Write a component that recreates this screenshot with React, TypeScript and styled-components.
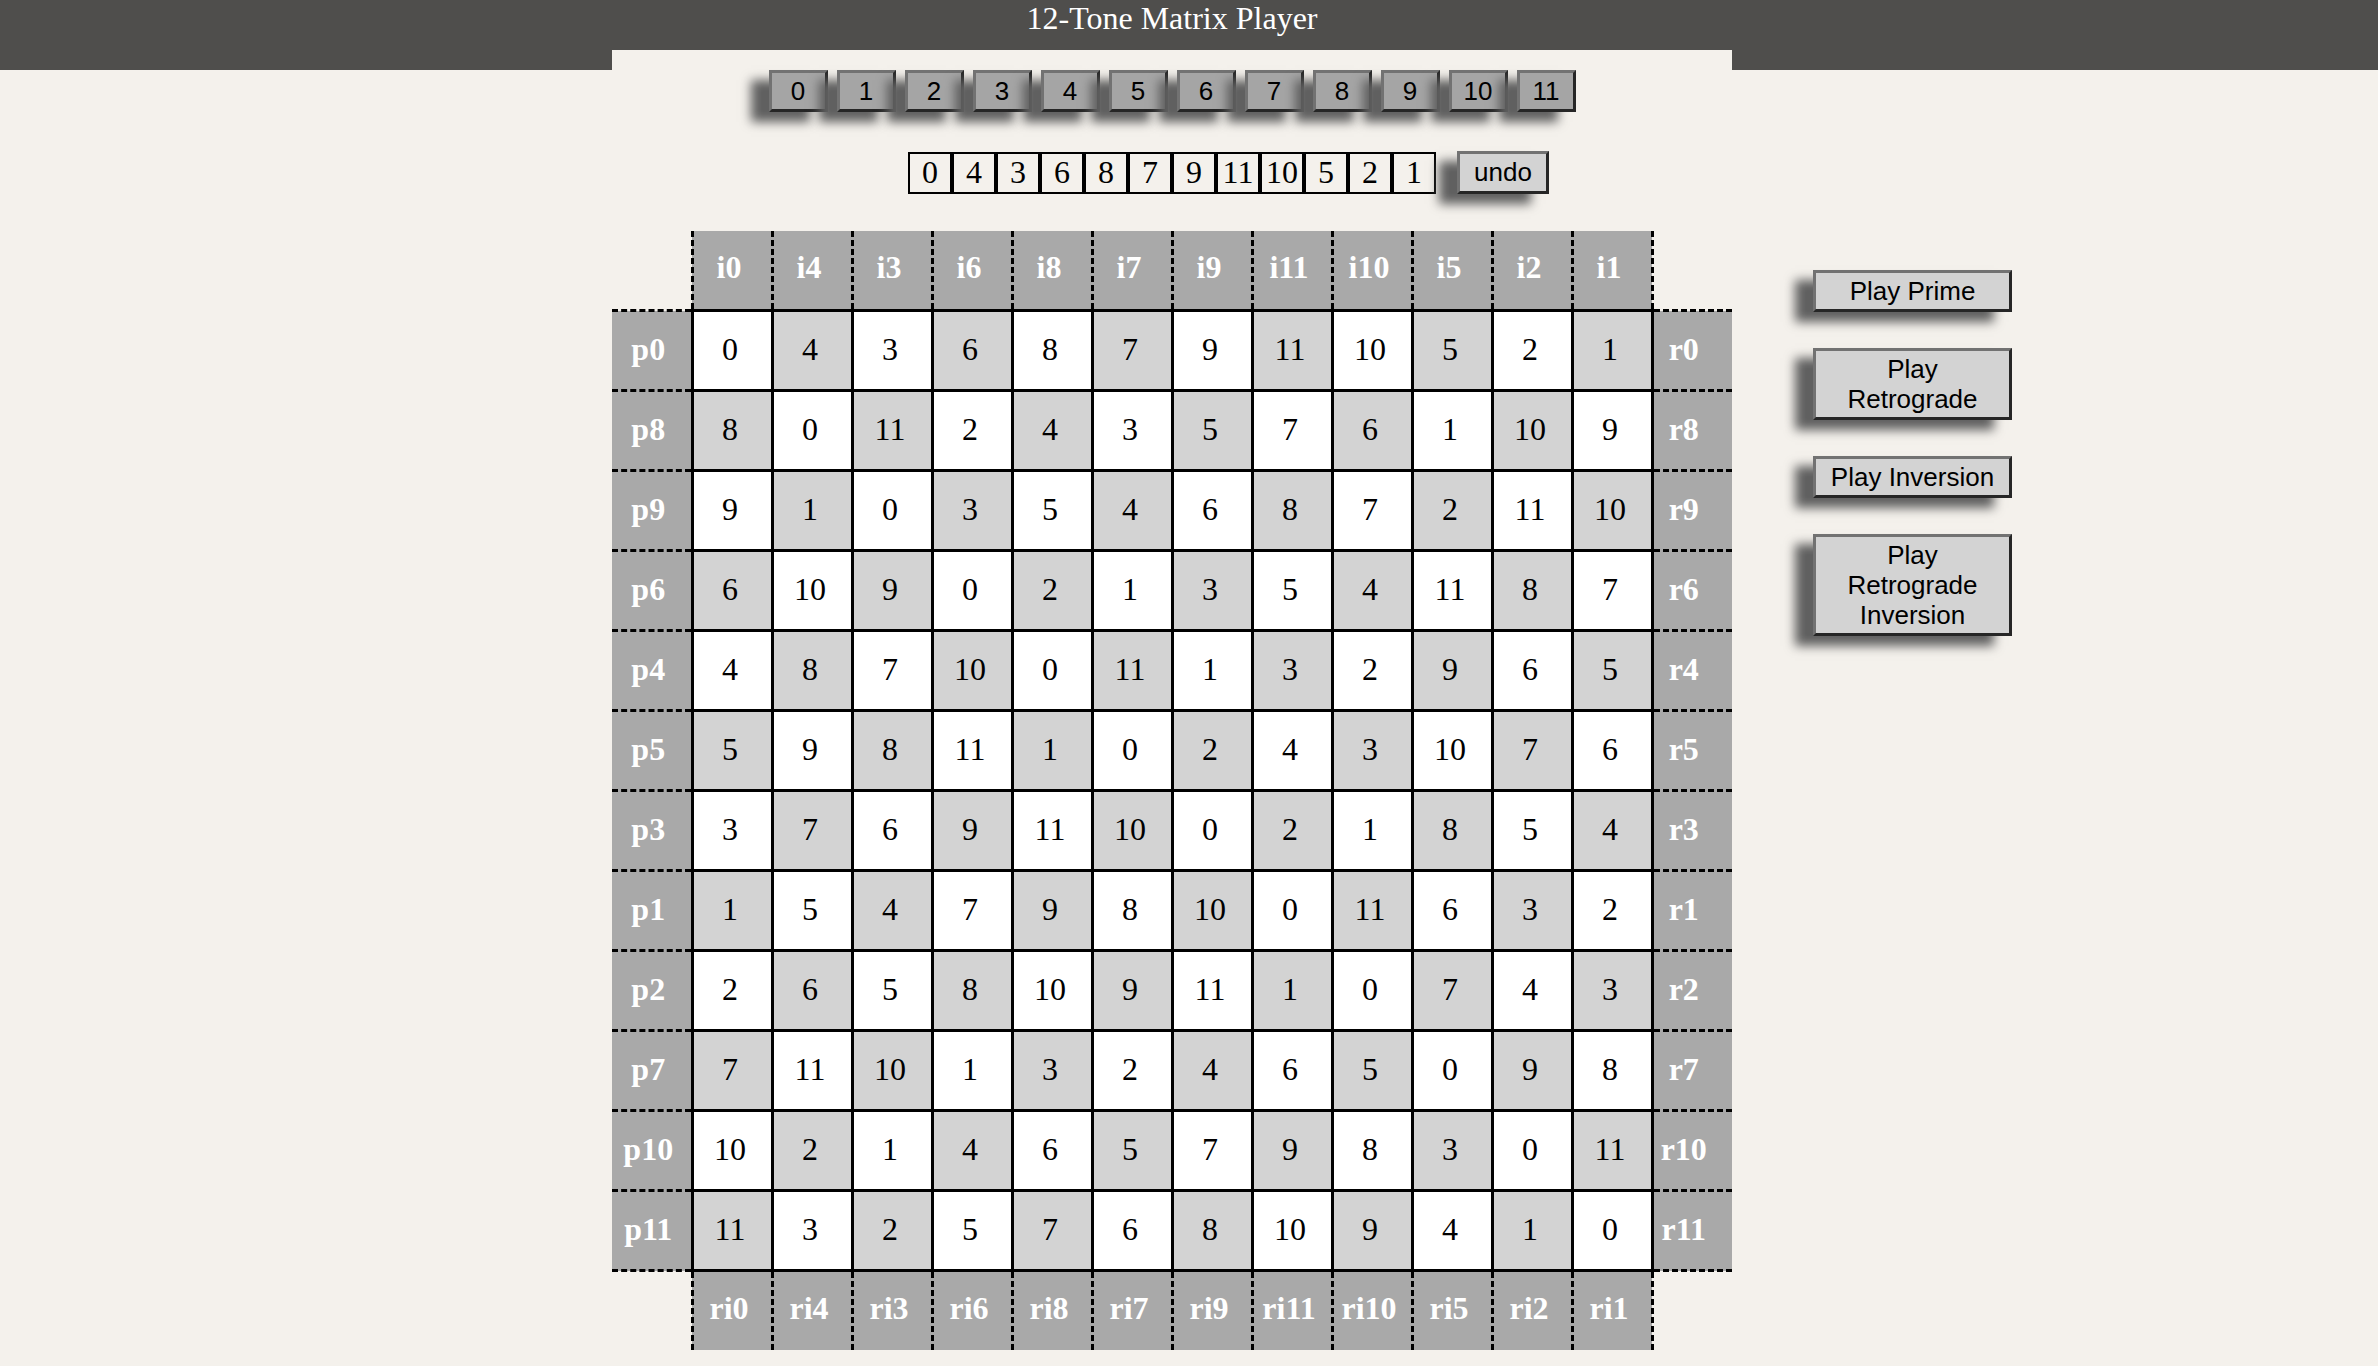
import React from 'react';
import styled, { createGlobalStyle } from 'styled-components';

const GlobalStyle = createGlobalStyle`
  html, body { margin: 0; padding: 0; background: #f4f1ec; }
  body { font-family: "Liberation Serif", "Times New Roman", serif; overflow: hidden; }
`;

const ROW = [0, 4, 3, 6, 8, 7, 9, 11, 10, 5, 2, 1];
const INV = ROW.map((n) => (12 - n) % 12);
const MATRIX = INV.map((a) => ROW.map((b) => (a + b) % 12));

const COLUMNS = '612px 1120px 1fr';

const Header = styled.header`
  height: 70px;
  background: #4f4e4c;
  display: grid;
  grid-template-columns: ${COLUMNS};
  align-items: start;
`;

const Title = styled.h1`
  grid-column: 2;
  margin: 0;
  text-align: center;
  font-family: "Liberation Serif", "Times New Roman", serif;
  font-weight: normal;
  font-size: 32px;
  line-height: 37px;
  color: #ffffff;
`;

const Layout = styled.div`
  display: grid;
  grid-template-columns: ${COLUMNS};
  margin-top: -20px;
`;

const Main = styled.main`
  grid-column: 2;
  background: #f4f1ec;
  display: flex;
  flex-direction: column;
  align-items: center;
  padding-top: 20px;
`;

const Side = styled.aside`
  grid-column: 3;
  padding: 220px 0 0 81px;
  display: flex;
  flex-direction: column;
  align-items: flex-start;
  gap: 36px;
`;

const BevelButton = styled.button`
  box-sizing: border-box;
  margin: 0;
  font-family: "Liberation Sans", Arial, sans-serif;
  font-size: 26px;
  color: #000;
  border-style: solid;
  border-width: 3px;
  border-color: #727272 #262626 #262626 #727272;
  box-shadow: -18px 10px 10px #606060;
  cursor: pointer;
`;

const PitchBar = styled.div`
  display: flex;
  gap: 9px;
`;

const PitchButton = styled(BevelButton)`
  width: 59px;
  height: 42px;
  padding: 0;
  background: #a5a5a5;
  font-size: 26px;
`;

const ToneRowLine = styled.div`
  width: 100%;
  margin-top: 39px;
  display: grid;
  grid-template-columns: 1fr auto 1fr;
  align-items: center;
`;

const ToneRow = styled.div`
  grid-column: 2;
  display: flex;
`;

const ToneBox = styled.span`
  box-sizing: border-box;
  width: 44px;
  height: 42px;
  border: 2px solid #000;
  display: flex;
  align-items: center;
  justify-content: center;
  font-family: "Liberation Serif", "Times New Roman", serif;
  font-size: 32px;
  color: #000;
`;

const UndoButton = styled(BevelButton)`
  justify-self: start;
  margin-left: 21px;
  width: 92px;
  height: 43px;
  padding: 0;
  background: #d3d3d3;
`;

const Matrix = styled.table`
  margin-top: 37px;
  width: 1120px;
  table-layout: fixed;
  border-collapse: collapse;
  font-family: "Liberation Serif", "Times New Roman", serif;
  font-size: 32px;
`;

const Corner = styled.td`
  height: 78px;
  padding: 0;
`;

type Edge = 'top' | 'left' | 'right' | 'bottom';

const isColumnLabel = (e: Edge) => e === 'top' || e === 'bottom';

const LabelCell = styled.th<{ $edge: Edge }>`
  height: ${(p) => (isColumnLabel(p.$edge) ? '72px' : '75px')};
  padding: 0 ${(p) => (p.$edge === 'right' ? '18px' : '6px')}
    ${(p) => (isColumnLabel(p.$edge) ? '5px' : '2px')} 0;
  background: #a9a9a9;
  color: #ffffff;
  font-weight: bold;
  text-align: center;
  vertical-align: middle;
  border: none;
  ${(p) =>
    isColumnLabel(p.$edge)
      ? 'border-left: 3px dashed #000; border-right: 3px dashed #000;'
      : 'border-top: 3px dashed #000; border-bottom: 3px dashed #000;'}
`;

const NumCell = styled.td<{ $shade: boolean }>`
  height: 75px;
  padding: 0 4px 2px 0;
  background: ${(p) => (p.$shade ? '#d3d3d3' : '#ffffff')};
  color: #000;
  text-align: center;
  vertical-align: middle;
  border: 3px solid #000;
`;

const PlayButton = styled(BevelButton)`
  width: 199px;
  padding: 3px 8px;
  background: #d3d3d3;
  line-height: 30px;
  text-align: center;
`;

export default function App() {
  return (
    <>
      <GlobalStyle />
      <Header>
        <Title>12-Tone Matrix Player</Title>
      </Header>
      <Layout>
        <Main>
          <PitchBar>
            {Array.from({ length: 12 }, (_, i) => (
              <PitchButton key={i}>{i}</PitchButton>
            ))}
          </PitchBar>
          <ToneRowLine>
            <ToneRow>
              {ROW.map((n, i) => (
                <ToneBox key={i}>{n}</ToneBox>
              ))}
            </ToneRow>
            <UndoButton>undo</UndoButton>
          </ToneRowLine>
          <Matrix>
            <tbody>
              <tr>
                <Corner />
                {ROW.map((n) => (
                  <LabelCell key={n} $edge="top">i{n}</LabelCell>
                ))}
                <Corner />
              </tr>
              {MATRIX.map((row, r) => (
                <tr key={r}>
                  <LabelCell $edge="left">p{row[0]}</LabelCell>
                  {row.map((v, c) => (
                    <NumCell key={c} $shade={(r + c) % 2 === 1}>{v}</NumCell>
                  ))}
                  <LabelCell $edge="right">r{row[0]}</LabelCell>
                </tr>
              ))}
              <tr>
                <Corner />
                {ROW.map((n) => (
                  <LabelCell key={n} $edge="bottom">ri{n}</LabelCell>
                ))}
                <Corner />
              </tr>
            </tbody>
          </Matrix>
        </Main>
        <Side>
          <PlayButton>Play Prime</PlayButton>
          <PlayButton>Play Retrograde</PlayButton>
          <PlayButton>Play Inversion</PlayButton>
          <PlayButton>Play Retrograde Inversion</PlayButton>
        </Side>
      </Layout>
    </>
  );
}
